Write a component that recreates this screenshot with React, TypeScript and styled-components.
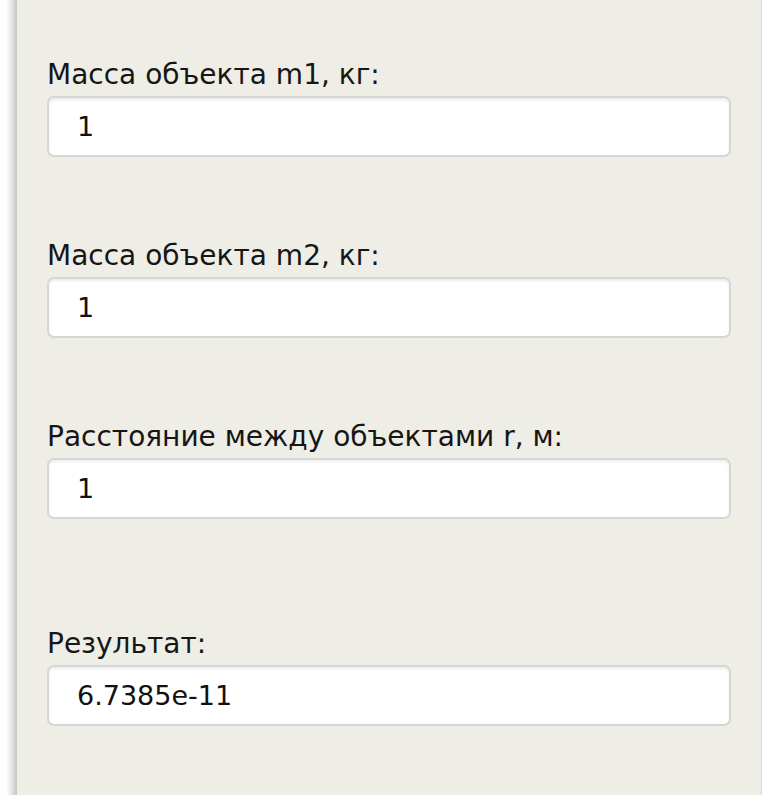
import styled, { createGlobalStyle } from "styled-components";

const GlobalStyle = createGlobalStyle`
    html, body {
        margin: 0;
        padding: 0;
        background: #ffffff;
    }
    body {
        font-family: "DejaVu Sans", "Liberation Sans", sans-serif;
    }
    *, *::before, *::after {
        box-sizing: border-box;
    }
`;

type Field = {
    label: string;
    value: string;
};

const inputs: Field[] = [
    { label: "Масса объекта m1, кг:", value: "1" },
    { label: "Масса объекта m2, кг:", value: "1" },
    { label: "Расстояние между объектами r, м:", value: "1" },
];

const result: Field = { label: "Результат:", value: "6.7385e-11" };

export default function App() {
    return (
        <>
            <GlobalStyle />
            <Page>
                <Panel>
                    {inputs.map((field) => (
                        <FieldRow key={field.label}>
                            <Label>{field.label}</Label>
                            <TextBox type="text" defaultValue={field.value} />
                        </FieldRow>
                    ))}
                    <ResultRow>
                        <Label>{result.label}</Label>
                        <TextBox type="text" readOnly defaultValue={result.value} />
                    </ResultRow>
                </Panel>
            </Page>
        </>
    );
}

const Page = styled.div`
    height: 795px;
    overflow: hidden;
    padding-left: 17px;
    background: linear-gradient(to right, #ffffff 0px, #ffffff 6px, #e4e4e1 12px, #c9c9c6 16px, #c9c9c6 17px, transparent 17px);
    display: flex;
`;

const Panel = styled.div`
    flex: 1;
    height: 795px;
    background: #eeede6;
    border-right: 1px solid #dcdbd4;
    padding: 58px 30px 0 30px;
    display: flex;
    flex-direction: column;
    gap: 82px;
`;

const FieldRow = styled.div`
    display: flex;
    flex-direction: column;
    gap: 4px;
`;

const ResultRow = styled(FieldRow)`
    margin-top: 26px;
`;

const Label = styled.label`
    font-size: 28px;
    line-height: 34px;
    color: #161616;
`;

const TextBox = styled.input`
    width: 100%;
    height: 61px;
    padding: 0 28px;
    font-family: "DejaVu Sans", "Liberation Sans", sans-serif;
    font-size: 27px;
    color: #111111;
    background: #ffffff;
    border: 2px solid #d6d6d3;
    border-radius: 7px;
    box-shadow: inset 0 2px 3px rgba(0, 0, 0, 0.08);
    outline: none;
`;
